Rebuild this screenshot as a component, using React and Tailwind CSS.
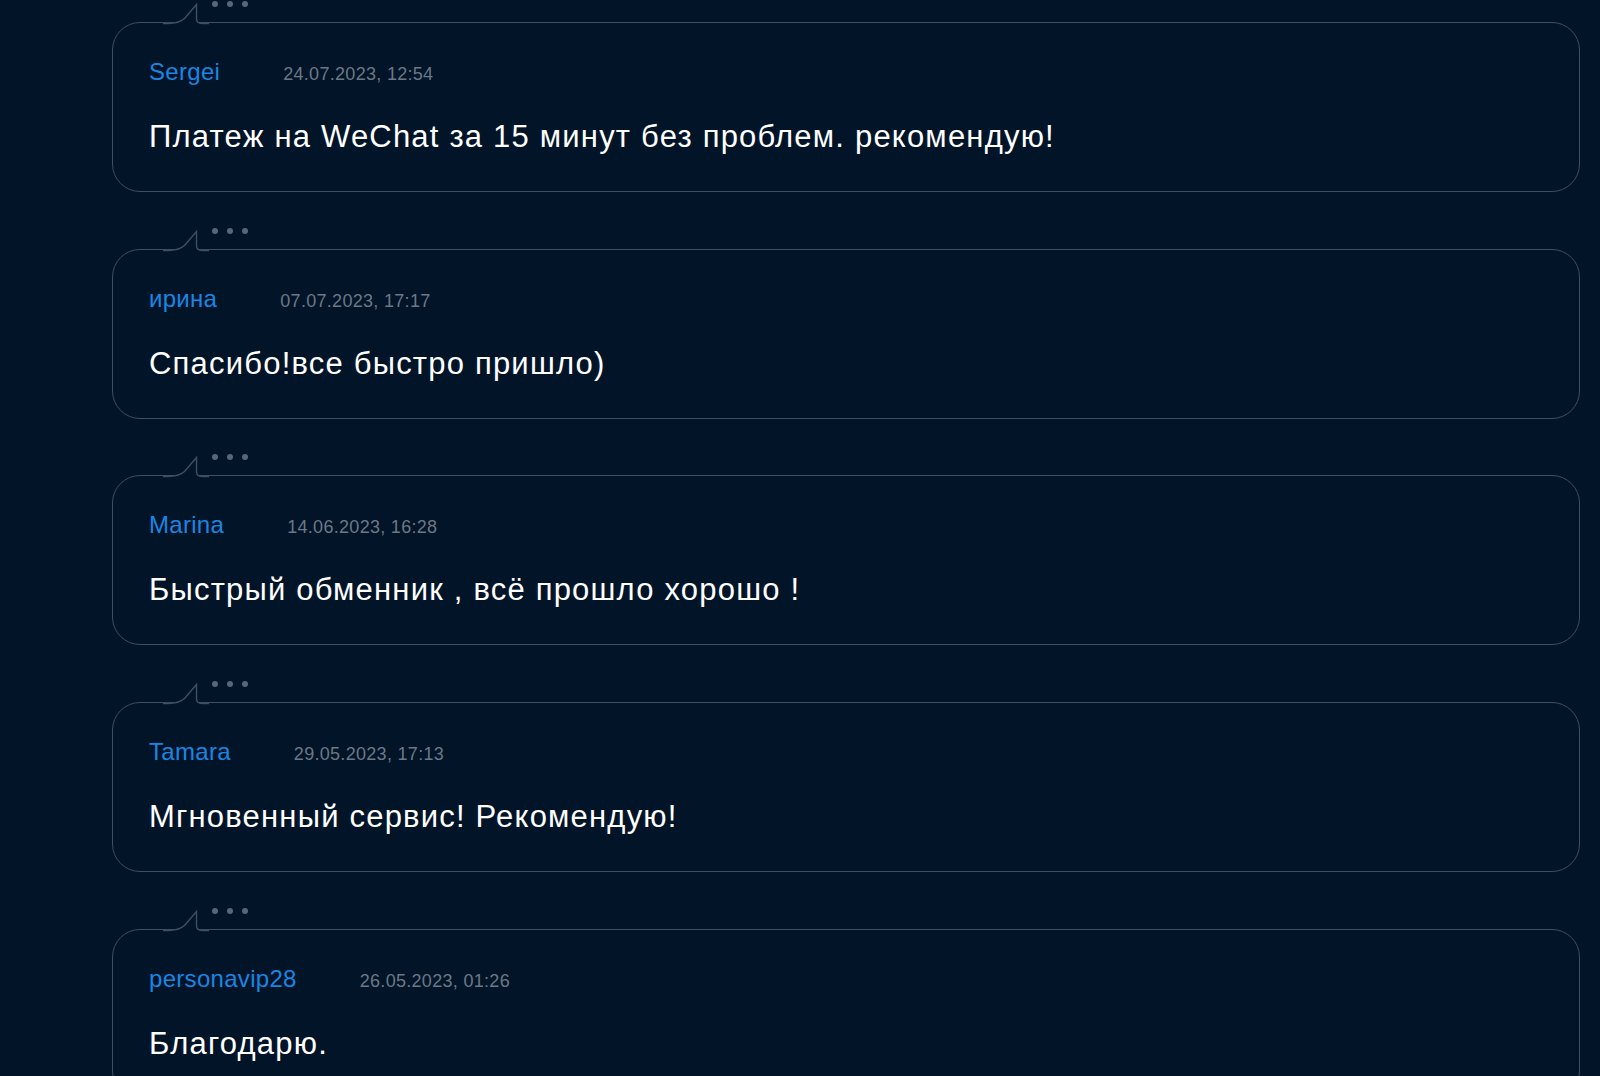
import React from 'react';

const reviews = [
  { name: 'Sergei', date: '24.07.2023, 12:54', text: 'Платеж на WeChat за 15 минут без проблем. рекомендую!' },
  { name: 'ирина', date: '07.07.2023, 17:17', text: 'Спасибо!все быстро пришло)' },
  { name: 'Marina', date: '14.06.2023, 16:28', text: 'Быстрый обменник , всё прошло хорошо !' },
  { name: 'Tamara', date: '29.05.2023, 17:13', text: 'Мгновенный сервис! Рекомендую!' },
  { name: 'personavip28', date: '26.05.2023, 01:26', text: 'Благодарю.' },
];

function Tail() {
  return (
    <svg
      className="absolute left-[50px] top-[-20px]"
      width="46"
      height="22"
      viewBox="0 0 46 22"
      fill="none"
    >
      <path
        d="M0 20.5 H5 C13 20.5 17 19.5 21.5 15.5 L33.5 1.5 V15.5 C33.5 18.5 35 20.5 39 20.5 H46 V22 H0 Z"
        fill="#011428"
      />
      <path
        d="M0 20.5 H5 C13 20.5 17 19.5 21.5 15.5 L33.5 1.5 V15.5 C33.5 18.5 35 20.5 39 20.5 H46"
        stroke="#3d4f62"
        strokeWidth="1.4"
      />
    </svg>
  );
}

function Review({ name, date, text }) {
  return (
    <div className="flex flex-col">
      <div className="h-[26px] flex items-start gap-[9px] pl-[100px] pt-[5px]">
        <span className="w-[6px] h-[6px] rounded-full bg-[#55677a]" />
        <span className="w-[6px] h-[6px] rounded-full bg-[#55677a]" />
        <span className="w-[6px] h-[6px] rounded-full bg-[#55677a]" />
      </div>
      <div className="relative h-[170px] rounded-[28px] border border-[#3d4f62] px-[36px] pt-[34px]">
        <Tail />
        <div className="flex items-baseline">
          <span className="text-[24px] leading-[30px] tracking-[0.3px] text-[#1a86e3]">{name}</span>
          <span className="ml-[63px] text-[18px] leading-[30px] tracking-[0.3px] text-[#6c7886]">{date}</span>
        </div>
        <div className="mt-[31px] text-[31px] leading-[34px] tracking-[1.2px] text-white">{text}</div>
      </div>
    </div>
  );
}

export default function App() {
  return (
    <div
      className="w-[1600px] h-[1076px] overflow-hidden bg-[#011428] pl-[112px] pr-[20px]"
      style={{ fontFamily: '"Liberation Sans", Arial, sans-serif' }}
    >
      <div className="flex flex-col gap-[30.7px] -mt-[4px]">
        {reviews.map((r) => (
          <Review key={r.name} {...r} />
        ))}
      </div>
    </div>
  );
}
